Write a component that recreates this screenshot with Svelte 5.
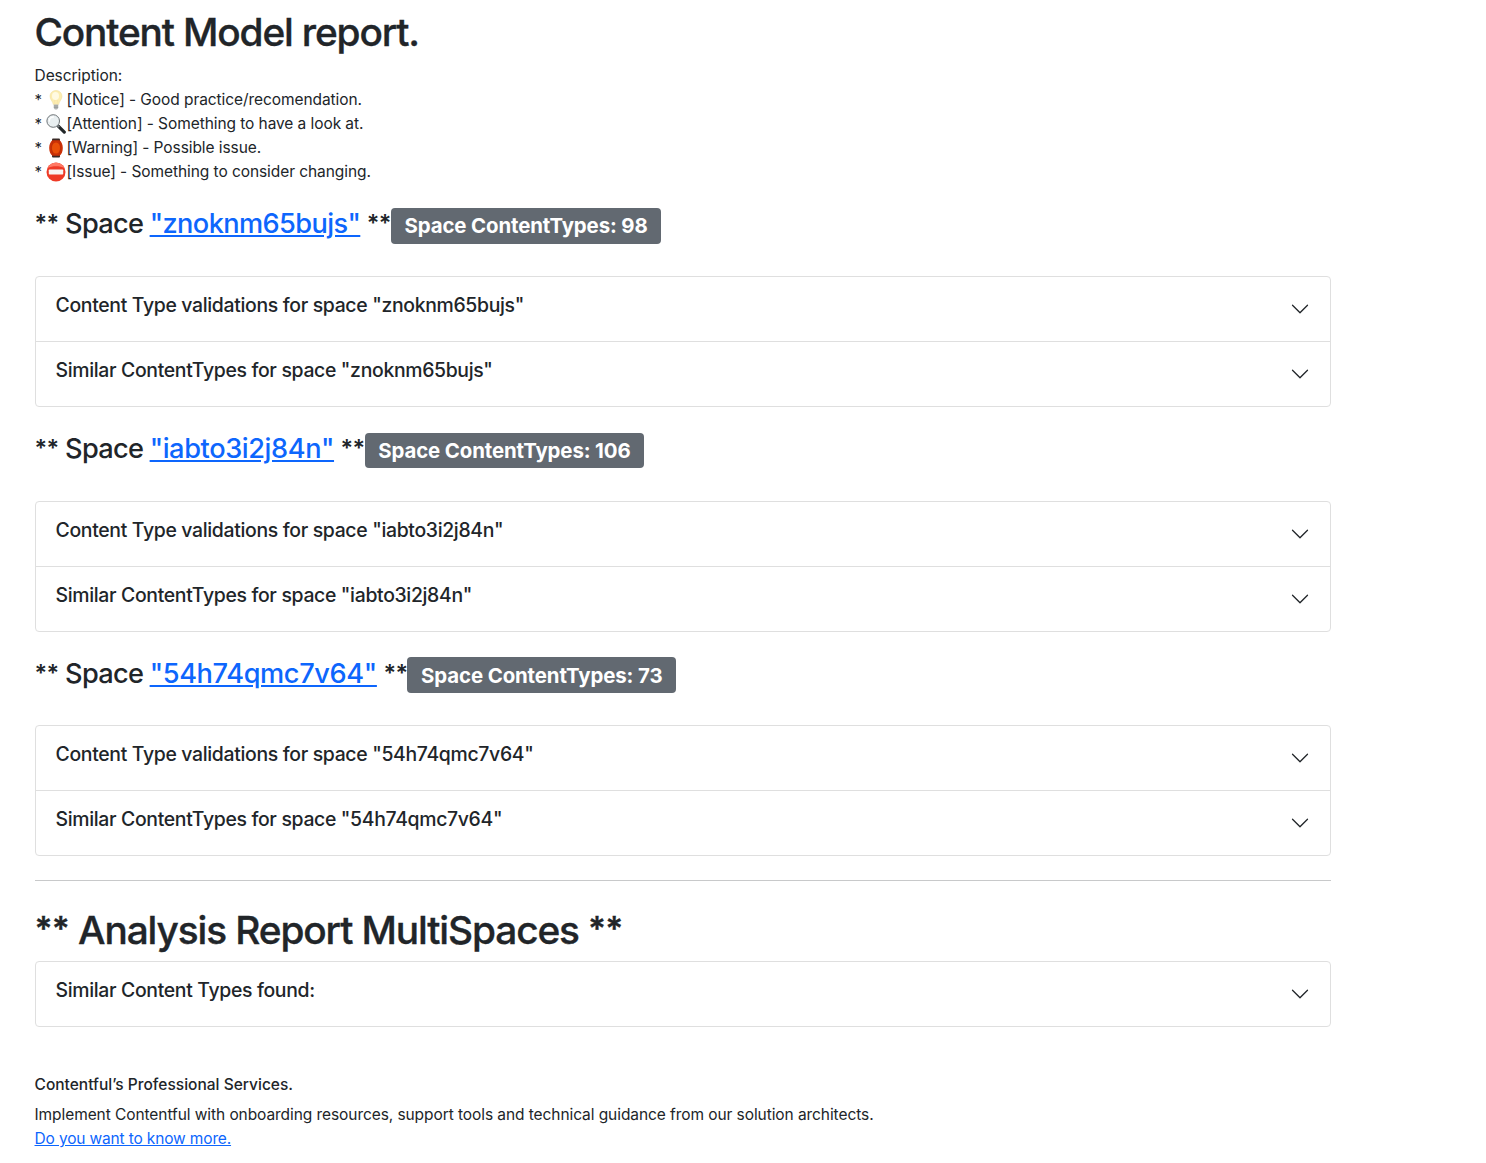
<script>
  const legend = [
    { icon: 'bulb', label: '[Notice] - Good practice/recomendation.' },
    { icon: 'lens', label: '[Attention] - Something to have a look at.' },
    { icon: 'lantern', label: '[Warning] - Possible issue.' },
    { icon: 'stop', label: '[Issue] - Something to consider changing.' }
  ];
  const spaces = [
    { id: 'znoknm65bujs', count: 98, tracking: -0.6 },
    { id: 'iabto3i2j84n', count: 106, tracking: -0.4 },
    { id: '54h74qmc7v64', count: 73, tracking: -0.37 }
  ];
</script>

{#snippet row(title)}
  <button class="row" type="button">
    <span class="row-title">{title}</span>
    <svg class="chevron" viewBox="0 0 16 16" aria-hidden="true">
      <path fill-rule="evenodd" d="M1.646 4.646a.5.5 0 0 1 .708 0L8 10.293l5.646-5.647a.5.5 0 0 1 .708.708l-6 6a.5.5 0 0 1-.708 0l-6-6a.5.5 0 0 1 0-.708z" />
    </svg>
  </button>
{/snippet}

{#snippet emoji(name)}
  <svg class="emoji" viewBox="0 0 20 20" aria-hidden="true">
    {#if name === 'bulb'}
      <path d="M10 .5c-3.500 0-6 2.600-6 5.800 0 3.300 2.800 5 3.300 8.200h5.400c.5-3.200 3.300-4.900 3.300-8.200C16 3.100 13.500.5 10 .5z" fill="#fcedb0" stroke="#eedd9c" stroke-width=".5" />
      <path d="M8.900 14 8.300 9.500l1.700.6 1.700-.6-.6 4.500" fill="none" stroke="#f6e3a4" stroke-width=".6" />
      <ellipse cx="9.500" cy="6" rx="3.500" ry="4" fill="#fffae2" />
      <path d="M7.800 14.500h4.400v3.400l-1.100 1.600H8.900l-1.100-1.600z" fill="#b5b8b6" />
      <path d="M7.800 16h4.400M7.800 17.600h4.400" stroke="#858989" stroke-width=".6" />
    {:else if name === 'lens'}
      <path d="m12.300 12.200 6 5.900" stroke="#222729" stroke-width="3.200" stroke-linecap="round" />
      <path d="m11 11 2.200 2.200" stroke="#777d80" stroke-width="1.800" />
      <circle cx="7.200" cy="7" r="6.300" fill="#e9eff1" stroke="#6e7477" stroke-width="1" />
      <path d="M3.300 7a4 4 0 0 1 4-3.900" fill="none" stroke="#fff" stroke-width="1.500" stroke-linecap="round" />
    {:else if name === 'lantern'}
      <rect x="6" y=".4" width="8" height="19.200" rx="1" fill="#3a2a26" />
      <path d="M6.500 2.200h7c2.100 1.400 3.300 4.400 3.300 7.800s-1.200 6.400-3.300 7.800h-7C4.400 16.400 3.200 13.400 3.200 10s1.200-6.400 3.300-7.800z" fill="#cb3107" />
      <ellipse cx="10" cy="10" rx="4.200" ry="5.500" fill="#e94f09" />
      <path d="M7.500 2.500C5 7 5 13 7.500 17.500M12.500 2.500c2.500 4.500 2.500 10.500 0 15" fill="none" stroke="#a92b08" stroke-width=".4" />
    {:else}
      <circle cx="10" cy="10" r="9.500" fill="#ee3a26" />
      <path d="M1.500 6A9.500 9.500 0 0 1 18.500 6C14 3.500 6 3.500 1.500 6z" fill="#ff7964" />
      <rect x="2.800" y="7.500" width="14.400" height="5" rx=".7" fill="#f8f4f2" />
    {/if}
  </svg>
{/snippet}

<main>
  <h1 class="report-title">Content Model report.</h1>
  <div class="legend">
    <div class="intro">Description:</div>
    {#each legend as item}
      <div class="legend-line"><span class="bullet">*</span>{@render emoji(item.icon)}<span>{item.label}</span></div>
    {/each}
  </div>

  {#each spaces as space}
    <section>
      <h3><span class="stars">**</span>{' Space '}<a href="#{space.id}" style:letter-spacing="{space.tracking}px">"{space.id}"</a>{' '}<span class="stars">**</span><span class="badge">Space ContentTypes: {space.count}</span></h3>
      <div class="accordion">
        {@render row(`Content Type validations for space "${space.id}"`)}
        {@render row(`Similar ContentTypes for space "${space.id}"`)}
      </div>
    </section>
  {/each}

  <hr />
  <h1><span class="stars">**</span>{' Analysis Report MultiSpaces '}<span class="stars">**</span></h1>
  <div class="accordion">
    {@render row('Similar Content Types found:')}
  </div>

  <footer>
    <h6>Contentful’s Professional Services.</h6>
    <p>Implement Contentful with onboarding resources, support tools and technical guidance from our solution architects.</p>
    <p><a class="more" href="#more">Do you want to know more.</a></p>
  </footer>
</main>

<style>
  :global(body) { margin: 0; background: #fff; }
  main {
    box-sizing: border-box;
    width: 1331px;
    height: 1163px;
    padding: 7.400px 0 0 34.500px;
    overflow: hidden;
    font: 400 15.500px/24px Inter, "Liberation Sans", sans-serif;
    letter-spacing: -0.075px;
    color: #212529;
    white-space: nowrap;
  }
  h1, h3, h6, p { margin: 0; }
  h1 {
    padding-top: 1px;
    margin-bottom: 7px;
    font-size: 38.800px;
    line-height: 48px;
    font-weight: 500;
    -webkit-text-stroke: 0.350px #212529;
    letter-spacing: -1.110px;
    white-space: pre;
  }
  .report-title { letter-spacing: -1.150px; }
  .stars {
    font-size: 0.860em;
    font-weight: 600;
    line-height: 0;
    letter-spacing: -0.025em;
    vertical-align: 0.080em;
  }
  .legend { padding-top: 0.600px; margin-bottom: 22.400px; }
  .intro { letter-spacing: -0.050px; }
  .legend-line { display: flex; align-items: center; height: 24px; }
  .bullet { width: 11.500px; font-size: 15px; }
  .emoji { width: 20px; height: 20px; margin-right: 0.500px; }
  a { color: #0d66fd; text-decoration: underline; }
  h3 {
    height: 33.600px;
    margin-bottom: 36px;
    font-size: 27.200px;
    line-height: 36.300px;
    font-weight: 500;
    letter-spacing: -0.740px;
    white-space: pre;
  }
  .badge {
    display: inline-block;
    padding: 7.350px 13.650px;
    border-radius: 4px;
    background: #626971;
    color: #fff;
    font-size: 20.400px;
    line-height: 21px;
    font-weight: 700;
    letter-spacing: -0.110px;
  }
  .accordion {
    border: 1px solid #dfdfdf;
    border-radius: 4px;
  }
  section .accordion { margin-bottom: 24px; }
  .row {
    display: flex;
    box-sizing: border-box;
    width: 100%;
    height: 64px;
    padding: 16px 20px;
    border: 0;
    background: none;
    align-items: center;
    justify-content: space-between;
    font: inherit;
    color: inherit;
  }
  .row + .row { border-top: 1px solid #dfdfdf; height: 65px; }
  .row-title {
    margin-bottom: 8px;
    font-size: 19.400px;
    line-height: 24px;
    font-weight: 500;
    letter-spacing: -0.320px;
  }
  .chevron { width: 20px; height: 20px; fill: #212529; }
  hr { height: 1px; margin: 0 0 24px; border: 0; background: #c8c9ca; }
  footer { margin-top: 40px; padding-top: 8px; }
  h6 { font-size: 15.500px; line-height: 19.200px; font-weight: 500; letter-spacing: 0.010px; margin-bottom: 8.600px; }
  .more { letter-spacing: -0.150px; }
</style>
